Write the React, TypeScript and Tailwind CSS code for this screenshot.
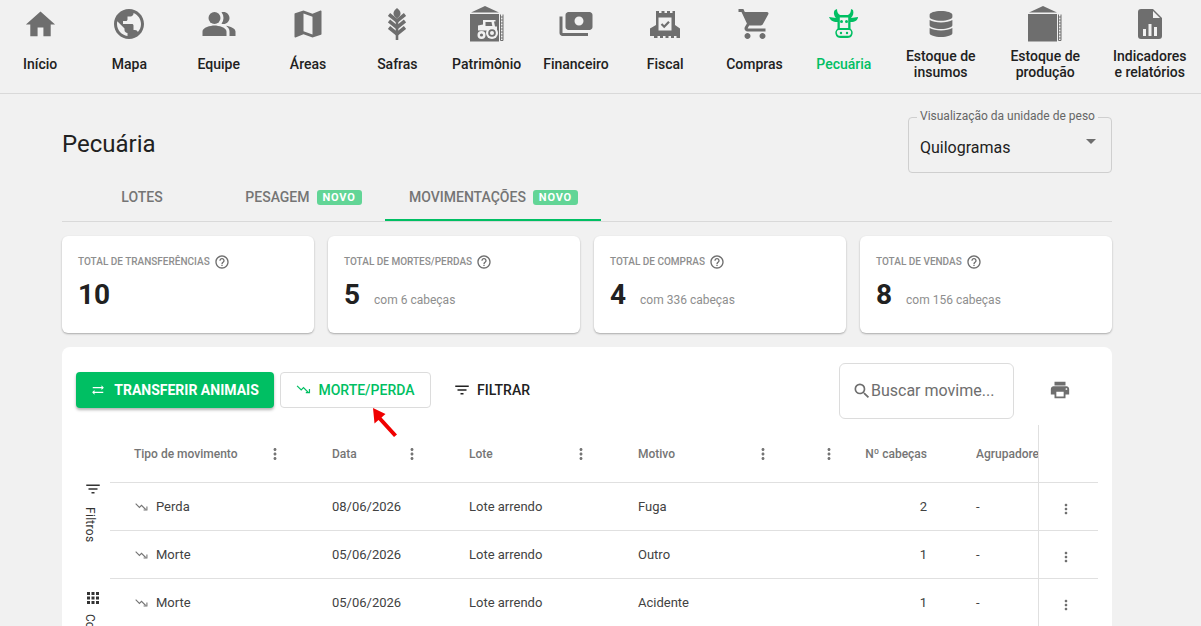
import {
  MdHome,
  MdPublic,
  MdPeopleAlt,
  MdMap,
  MdPayments,
  MdShoppingCart,
  MdPrint,
  MdFilterList,
  MdApps,
  MdMoreVert,
  MdHelpOutline,
  MdSearch,
  MdArrowDropDown,
  MdSyncAlt,
} from "react-icons/md";
import { FaDatabase } from "react-icons/fa";
import type { ReactNode } from "react";

function WheatIcon() {
  return (
    <svg viewBox="0 0 18 32" className="h-[32px] w-[18px]" fill="none" stroke="#6e6e6e" strokeWidth="3.6">
      <path d="M9 0c2.500 2 3.500 3.500 3.500 5.500S11 9 9 10.500C7 9 5.500 7.500 5.500 5.500S6.500 2 9 0z" fill="#6e6e6e" stroke="none" />
      <path d="M1 6.500l8 6.500 8-6.500" />
      <path d="M1 13l8 6.500 8-6.500" />
      <path d="M1 19.500l8 6.500 8-6.500" />
      <path d="M9 12v20" strokeWidth="2.600" />
    </svg>
  );
}

function BarnIcon() {
  return (
    <svg viewBox="0 0 34 36" className="h-[36px] w-[34px]">
      <path d="M15 0l14 6.500H1z" fill="#6e6e6e" />
      <path d="M0 8h29v27.500H0z" fill="#6e6e6e" />
      <path d="M30.500 8.500v26h2.500v-26" fill="none" stroke="#6e6e6e" strokeWidth="1" />
      <path d="M30.500 11h2.500M30.500 14h2.500M30.500 17h2.500M30.500 20h2.500M30.500 23h2.500M30.500 26h2.500M30.500 29h2.500M30.500 32h2.500" stroke="#6e6e6e" strokeWidth="1" />
      <path d="M13 14h12.500v1.500H24l1 5h2v4H8v-5l5-1z" fill="#f1f1f1" />
      <path d="M15.500 16h6l.8 4h-6.800z" fill="#6e6e6e" />
      <circle cx="22" cy="27" r="6" fill="#f1f1f1" />
      <circle cx="22" cy="27" r="3.800" fill="#6e6e6e" />
      <circle cx="22" cy="27" r="2" fill="#f1f1f1" />
      <circle cx="11.500" cy="29" r="4" fill="#f1f1f1" />
      <circle cx="11.500" cy="29" r="1.600" fill="#6e6e6e" />
    </svg>
  );
}

function ReceiptIcon() {
  return (
    <svg viewBox="0 0 30 27" className="h-[27px] w-[30px]">
      <path
        d="M6 0h3v2h2.500V0h3v2H17V0h3v2h2.500V0H25v14l5 3.500V27h-3.500v-2H24v2h-3v-2h-2.500v2h-3v-2H13v2h-3v-2H7.500v2H4v-2H0v-7.500L6 14z"
        fill="#6e6e6e"
      />
      <path d="M8.500 6.500h13v13h-13z" fill="#f1f1f1" />
      <path d="M11.500 13l2.700 2.700 4.800-5" fill="none" stroke="#6e6e6e" strokeWidth="2.200" />
    </svg>
  );
}

function CowIcon() {
  return (
    <svg viewBox="0 0 30 30" className="h-[30px] w-[30px]">
      <path d="M8 0c0 3 1 5 3 6h8c2-1 3-3 3-6l2 1c1 3 0 6-2 8l7-1c0 3-3 5-7 5H8C4 13 1 11 0 8l7 1C5 7 4 3 6 1z" fill="#00bf63" />
      <path d="M8.500 6.500h13v13c2 2 2.500 3.500 2 5.500-.5 3-3 4-5 4h-7c-2 0-4.500-1-5-4-.5-2 0-3.500 2-5.500z" fill="#00bf63" />
      <path d="M10.800 8.500h8.400v10.500h-8.400z" fill="#f1f1f1" />
      <path d="M10 21h10c2 0 2.500 2 2 3.500-.4 1.500-1.500 2.300-3 2.300h-8c-1.500 0-2.600-.8-3-2.300-.5-1.500 0-3.500 2-3.500z" fill="#f1f1f1" />
      <circle cx="12.500" cy="12.500" r="1.500" fill="#00bf63" />
      <circle cx="17.500" cy="12.500" r="1.500" fill="#00bf63" />
      <circle cx="12" cy="24" r="1.200" fill="#00bf63" />
      <circle cx="18" cy="24" r="1.200" fill="#00bf63" />
    </svg>
  );
}

function SiloIcon() {
  return (
    <svg viewBox="0 0 34 36" className="h-[36px] w-[34px]">
      <path d="M15 0l14 6.500H1z" fill="#6e6e6e" />
      <path d="M0 8h29v27.500H0z" fill="#6e6e6e" />
      <path d="M30.500 8.500v26h2.500v-26" fill="none" stroke="#6e6e6e" strokeWidth="1" />
      <path d="M30.500 11h2.500M30.500 14h2.500M30.500 17h2.500M30.500 20h2.500M30.500 23h2.500M30.500 26h2.500M30.500 29h2.500M30.500 32h2.500" stroke="#6e6e6e" strokeWidth="1" />
    </svg>
  );
}

function ReportIcon() {
  return (
    <svg viewBox="0 0 24 30" className="h-[30px] w-[24px]">
      <path
        d="M3 0h12l9 9v18a3 3 0 0 1-3 3H3a3 3 0 0 1-3-3V3a3 3 0 0 1 3-3z"
        fill="#6e6e6e"
      />
      <path d="M15 2v7h7z" fill="#f1f1f1" />
      <path d="M5 20h3v7H5zM10.500 15h3v12h-3zM16 18h3v9h-3z" fill="#f1f1f1" />
    </svg>
  );
}

function LossIcon({ className }: { className: string }) {
  return (
    <svg viewBox="0 0 16 12" className={className} fill="none" stroke="currentColor" strokeWidth="1.300">
      <path d="M1 2l4.500 4.500 2.500-2.500 5 5" />
      <path d="M14.500 5.500v4h-4" />
    </svg>
  );
}

type NavItem = { label: ReactNode; icon: ReactNode; active?: boolean };

const navItems: NavItem[] = [
  { label: "Início", icon: <MdHome className="text-[35px]" /> },
  { label: "Mapa", icon: <MdPublic className="text-[36px]" /> },
  { label: "Equipe", icon: <MdPeopleAlt className="text-[36px]" /> },
  { label: "Áreas", icon: <MdMap className="text-[36px]" /> },
  { label: "Safras", icon: <WheatIcon /> },
  { label: "Patrimônio", icon: <BarnIcon /> },
  { label: "Financeiro", icon: <MdPayments className="-scale-x-100 text-[36px]" /> },
  { label: "Fiscal", icon: <ReceiptIcon /> },
  { label: "Compras", icon: <MdShoppingCart className="text-[36px]" /> },
  { label: "Pecuária", icon: <CowIcon />, active: true },
];

const wideItems: NavItem[] = [
  { label: <>Estoque de<br />insumos</>, icon: <FaDatabase className="text-[26px]" /> },
  { label: <>Estoque de<br />produção</>, icon: <SiloIcon /> },
  { label: <>Indicadores<br />e relatórios</>, icon: <ReportIcon /> },
];

const cards = [
  { title: "TOTAL DE TRANSFERÊNCIAS", value: "10", sub: "" },
  { title: "TOTAL DE MORTES/PERDAS", value: "5", sub: "com 6 cabeças" },
  { title: "TOTAL DE COMPRAS", value: "4", sub: "com 336 cabeças" },
  { title: "TOTAL DE VENDAS", value: "8", sub: "com 156 cabeças" },
];

const rows = [
  { tipo: "Perda", data: "08/06/2026", motivo: "Fuga", qtd: "2" },
  { tipo: "Morte", data: "05/06/2026", motivo: "Outro", qtd: "1" },
  { tipo: "Morte", data: "05/06/2026", motivo: "Acidente", qtd: "1" },
];

const gridCols = "grid grid-cols-[222px_137px_169px_182px_156px_62px_60px]";
const cell = "flex items-center";

function Novo() {
  return (
    <span className="ml-[7px] rounded-[3px] bg-[#62d596] px-[6px] text-[11px] font-bold leading-[15px] tracking-[0.8px] text-white">
      NOVO
    </span>
  );
}

export default function App() {
  return (
    <div className="h-[626px] w-[1201px] overflow-hidden bg-[#f1f1f1] font-['Roboto',sans-serif] text-[#212121]">
      {/* Top menu */}
      <div className="ml-[-4.500px] grid h-[94px] grid-cols-[repeat(10,89.3px)_repeat(3,104.500px)] border-b border-[#d9d9d9]">
        {navItems.map((item, i) => (
          <div key={i} className={`flex flex-col items-center ${item.active ? "text-[#00bf63]" : "text-[#6e6e6e]"}`}>
            <div className="flex h-[41px] items-center pt-[7px]">{item.icon}</div>
            <div className={`mt-[14px] text-sm font-medium leading-[18px] ${item.active ? "text-[#00bf63]" : "text-[#212121]"}`}>
              {item.label}
            </div>
          </div>
        ))}
        {wideItems.map((item, i) => (
          <div key={i} className="flex flex-col items-center text-[#6e6e6e]">
            <div className="flex h-[41px] items-center pt-[7px]">{item.icon}</div>
            <div className="mt-[7px] text-center text-sm font-medium leading-[16px] text-[#212121]">{item.label}</div>
          </div>
        ))}
      </div>

      <div className="mx-[62px] w-[1050px]">
        {/* Title row */}
        <div className="flex h-[83px] items-start justify-between">
          <h1 className="mt-[35px] text-2xl leading-[30px]">Pecuária</h1>
          <div className="relative mt-[23px] flex h-[56px] w-[204px] items-center justify-between rounded border border-[#cfcfcf] pl-[11px] pr-[8px]">
            <span className="absolute left-[8px] top-[-10px] bg-[#f1f1f1] px-[3px] text-xs leading-[16px] text-[#666666]">
              Visualização da unidade de peso
            </span>
            <span className="pt-[5px] text-base">Quilogramas</span>
            <MdArrowDropDown className="mb-[8px] text-2xl text-[#6e6e6e]" />
          </div>
        </div>

        {/* Tabs */}
        <div className="flex h-[45px] items-center border-b border-[#d9d9d9] text-sm font-medium text-[#757575]">
          <div className="flex h-full w-[160px] items-center justify-center pb-[4px]">LOTES</div>
          <div className="flex h-full w-[163px] items-center justify-center pb-[4px]">PESAGEM<Novo /></div>
          <div className="flex h-full w-[216px] items-center justify-center border-b-2 border-[#00bf63] pb-[2px] pl-[1px]">
            MOVIMENTAÇÕES<Novo />
          </div>
        </div>

        {/* Cards */}
        <div className="mt-[14px] grid grid-cols-4 gap-[14px]">
          {cards.map((c) => (
            <div key={c.title} className="h-[97px] rounded-md bg-white pl-4 pt-[17px] shadow-[0_1px_2px_rgba(0,0,0,0.3)]">
              <div className="flex items-center text-[10px] font-medium leading-[18px] text-[#8e8e8e]">
                {c.title}
                <MdHelpOutline className="ml-[4px] text-base text-[#6e6e6e]" />
              </div>
              <div className="mt-[7px] flex items-baseline">
                <span className="text-[28px] font-bold leading-[34px]">{c.value}</span>
                <span className="ml-[14px] text-xs text-[#8e8e8e]">{c.sub}</span>
              </div>
            </div>
          ))}
        </div>

        {/* Table panel */}
        <div className="mt-[14px] h-[300px] rounded-lg bg-white pl-[14px]">
          <div className="flex h-[78px] items-center pt-[7px]">
            <button className="flex h-[36px] w-[198px] items-center justify-center rounded bg-[#00bf63] text-sm font-bold text-white shadow-[0_2px_3px_rgba(0,0,0,0.3)]">
              <MdSyncAlt className="mr-[9px] text-sm" />
              TRANSFERIR ANIMAIS
            </button>
            <button className="relative ml-[6px] flex h-[36px] w-[151px] items-center justify-center rounded border border-[#dcdcdc] text-sm font-medium text-[#00bf63]">
              <LossIcon className="mr-[7px] h-[11px] w-[15px]" />
              MORTE/PERDA
              {/* Red arrow annotation */}
              <svg viewBox="0 0 26 30" className="absolute left-[91px] top-[35px] h-[30px] w-[26px] overflow-visible">
                <path d="M1 0l12.500 6-4 3.500L25 26.500l-3 2.500L6.500 12 2.500 15.500z" fill="#f00000" />
              </svg>
            </button>
            <button className="ml-[22px] flex items-center text-sm font-medium">
              <MdFilterList className="mr-[6px] text-lg" />
              FILTRAR
            </button>
            <div className="ml-[309px] mt-[2px] flex h-[56px] w-[175px] items-center rounded-md border border-[#dcdcdc] pl-[12px] text-base text-[#6e6e6e]">
              <MdSearch className="text-xl" />
              <span className="ml-[-1px]">Buscar movime...</span>
            </div>
            <MdPrint className="ml-[35px] text-[22px] text-[#6e6e6e]" />
          </div>

          <div className="flex">
            {/* Side filters */}
            <div className="flex w-[34px] flex-col items-center pt-[55px] text-[#333333]">
              <MdFilterList className="text-lg" />
              <div className="mt-[9px] h-[82px] pr-[6px] text-xs tracking-[0.3px] [writing-mode:vertical-rl]">Filtros</div>
              <MdApps className="text-lg" />
              <div className="mt-[7px] pr-[6px] text-xs [writing-mode:vertical-rl]">Colunas</div>
            </div>

            {/* Table */}
            <div className="w-[988px] overflow-hidden text-[13px]">
              <div className={`${gridCols} h-[58px] items-center border-b border-[#e0e0e0] text-xs font-medium text-[#757575]`}>
                <div className="flex items-center justify-between pl-[24px] pr-[48px]"><span>Tipo de movimento</span><MdMoreVert className="text-lg" /></div>
                <div className="flex items-center justify-between pr-[48px]"><span>Data</span><MdMoreVert className="text-lg" /></div>
                <div className="flex items-center justify-between pr-[48px]"><span>Lote</span><MdMoreVert className="text-lg" /></div>
                <div className="flex items-center justify-between pr-[48px]"><span>Motivo</span><MdMoreVert className="text-lg" /></div>
                <div className="flex items-center justify-between pr-[49px]"><MdMoreVert className="text-lg" /><span>Nº cabeças</span></div>
                <div className="overflow-hidden whitespace-nowrap">Agrupadores</div>
                <div className="h-full border-l border-[#e0e0e0]" />
              </div>
              {rows.map((r, i) => (
                <div key={i} className={`${gridCols} h-[48px] border-b border-[#e0e0e0] text-[#424242]`}>
                  <div className={`${cell} pl-[24px]`}>
                    <LossIcon className="mr-[7px] h-[10px] w-[15px] text-[#757575]" />
                    {r.tipo}
                  </div>
                  <div className={cell}>{r.data}</div>
                  <div className={cell}>Lote arrendo</div>
                  <div className={cell}>{r.motivo}</div>
                  <div className={`${cell} justify-end pr-[49px]`}>{r.qtd}</div>
                  <div className={cell}>-</div>
                  <div className="flex items-center justify-center border-l border-[#e0e0e0] pr-[6px] pt-[4px]">
                    <MdMoreVert className="text-base text-[#6e6e6e]" />
                  </div>
                </div>
              ))}
            </div>
          </div>
        </div>
      </div>
    </div>
  );
}
